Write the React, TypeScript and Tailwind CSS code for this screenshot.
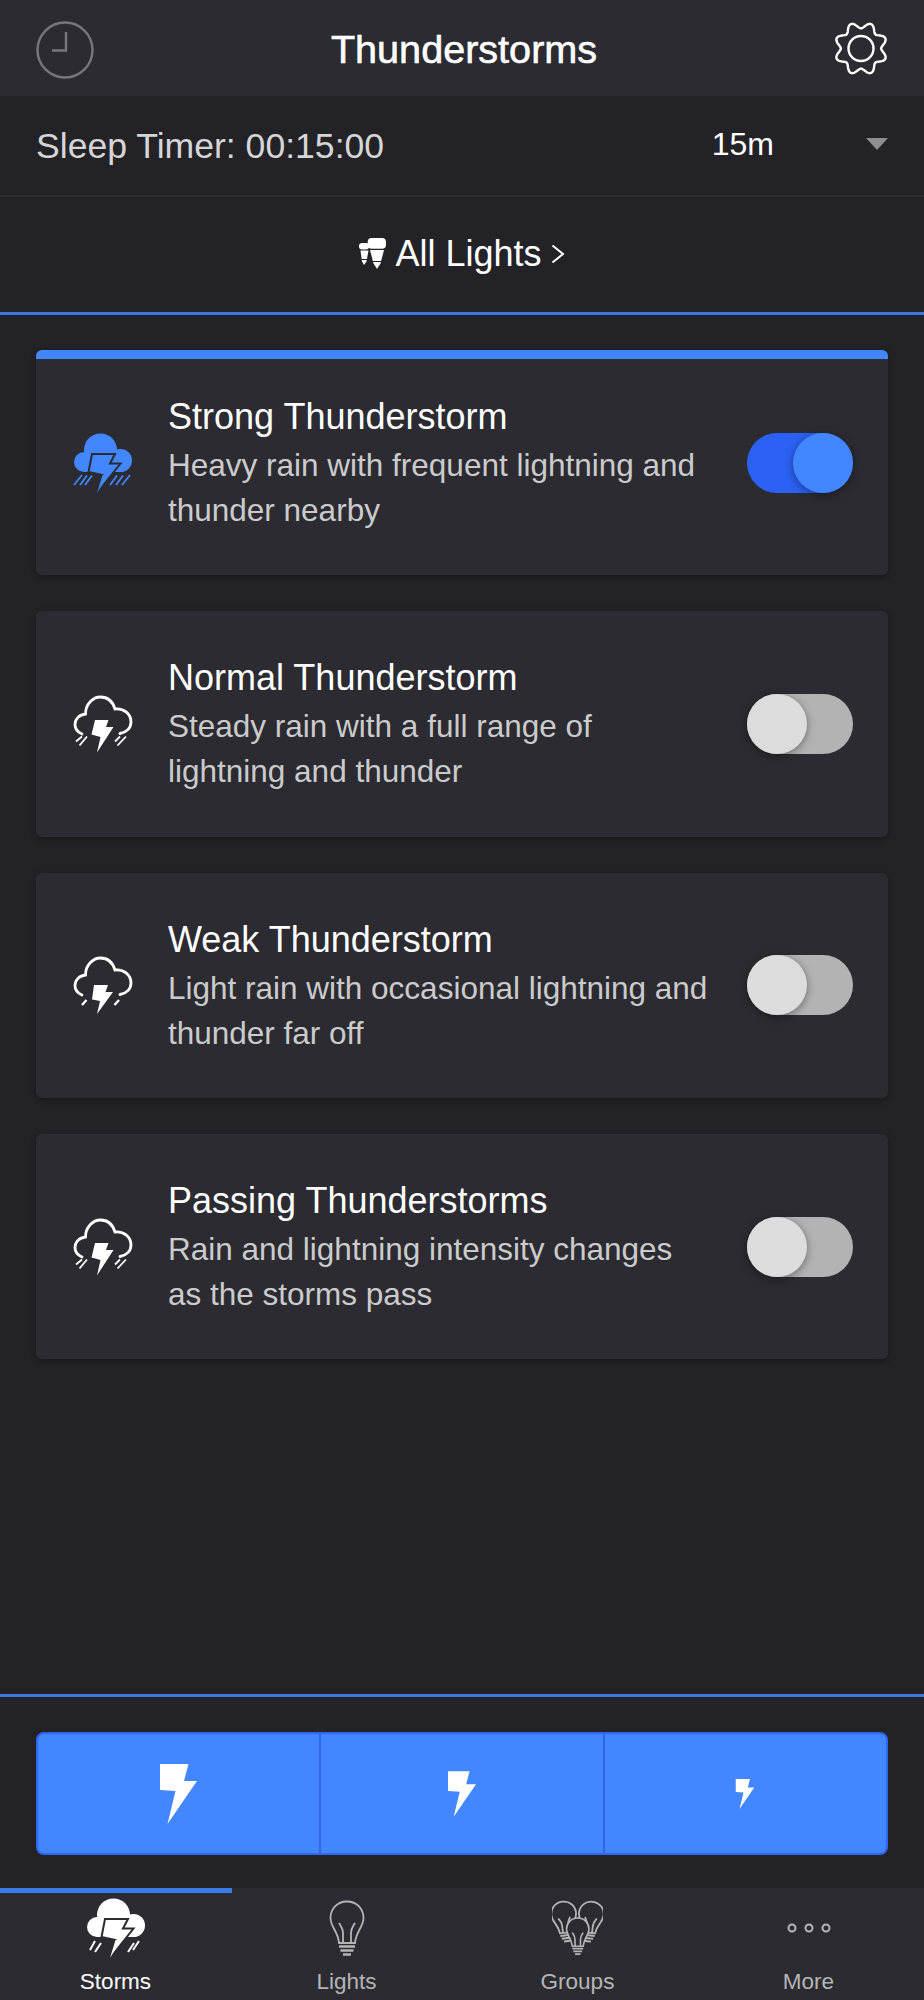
import React from "react";

const storms = [
  { title: "Strong Thunderstorm", desc: "Heavy rain with frequent lightning and\nthunder nearby", on: true, icon: "strong" },
  { title: "Normal Thunderstorm", desc: "Steady rain with a full range of\nlightning and thunder", on: false, icon: "normal" },
  { title: "Weak Thunderstorm", desc: "Light rain with occasional lightning and\nthunder far off", on: false, icon: "weak" },
  { title: "Passing Thunderstorms", desc: "Rain and lightning intensity changes\nas the storms pass", on: false, icon: "normal" },
];

// wavy outline for the settings cog
const gearPath = () => {
  const pts: string[] = [];
  for (let i = 0; i < 240; i++) {
    const a = (i / 240) * Math.PI * 2;
    const r = 23.3 + 3.1 * Math.cos(8 * a + Math.PI);
    pts.push(`${(27 + r * Math.sin(a)).toFixed(2)} ${(26.5 - r * Math.cos(a)).toFixed(2)}`);
  }
  return `M${pts.join("L")}Z`;
};

function Gear() {
  return (
    <svg width="54" height="53" viewBox="0 0 54 53" fill="none" stroke="white" strokeWidth="2.4" className="mt-px">
      <path d={gearPath()} strokeLinejoin="round" />
      <circle cx="27" cy="26.5" r="12.5" />
    </svg>
  );
}

function Clock() {
  return (
    <svg width="58" height="58" viewBox="0 0 58 58" fill="none" stroke="#77777b" className="mt-[3px]">
      <circle cx="29" cy="29" r="27.5" strokeWidth="2.4" />
      <path d="M30 11V29.5H16" strokeWidth="2.4" />
    </svg>
  );
}

function FilledStorm({ className, tab }: { className: string; tab?: boolean }) {
  return (
    <svg width="60" height="60" viewBox="0 0 60 60" className={className}>
      <g fill="currentColor">
        <circle cx="27.5" cy="17" r="16.5" />
        <circle cx="11" cy="29" r="10" />
        <circle cx="47.5" cy="27.5" r="11.5" />
        <rect x="11" y="24" width="37" height="15" />
      </g>
      <path d="M19 21H42L37 30.5H47.5L24 60L29.5 42L15.5 39Z" fill="currentColor" stroke="#2b2b31" strokeWidth="2" />
      <path d="M24 60L29.5 42H35L24 60Z" fill="currentColor" />
      {tab ? (
        <path d="M4 52L9 43M9 54L15 45M42 54L48 45M47 52L53 43" stroke="currentColor" strokeWidth="2" fill="none" />
      ) : (
        <path d="M1 52L9 42M7 52L14 42.5M12 52L19 42.5M37 52L44 42.5M43 52L50 42.5M49 52L57 42" stroke="currentColor" strokeWidth="1.8" fill="none" />
      )}
    </svg>
  );
}

function OutlineStorm({ weak }: { weak: boolean }) {
  return (
    <svg width="60" height="58" viewBox="0 0 60 58" className="text-white">
      <path
        d="M9 39C4.5 37 2 33.5 2 29.5C2 24 6.5 19.5 12.5 19C12.5 9 20 2 27.5 2C34 2 39.5 6 42 14C51 13 58 19 58 27C58 33 53.5 37.5 47 38.5"
        fill="none"
        stroke="currentColor"
        strokeWidth="2.8"
        strokeLinecap="round"
      />
      {weak ? (
        <>
          <path d="M21 29H35L32.5 36H40L24 58L27 45L19 43.5Z" fill="currentColor" />
          <path d="M9 49L13.5 44M41.5 49L46 44" stroke="currentColor" strokeWidth="2.4" />
        </>
      ) : (
        <>
          <path d="M22 25H35.5L33 32H40.5L24 57.5L27.5 42L18.5 39.5Z" fill="currentColor" />
          <path d="M3 46.5L9 41.5M6.5 50.5L14 41.5M42 46.5L47 41.5M44.5 50.5L53 41.5" stroke="currentColor" strokeWidth="1.8" />
        </>
      )}
    </svg>
  );
}

function Bolt({ width, height }: { width: number; height: number }) {
  return (
    <svg width={width} height={height} viewBox="0 0 37 60" fill="white">
      <path d="M0 0H28.5L24 17H37L7.5 60L15.5 27L0 26Z" />
    </svg>
  );
}

const BULB_GLASS = "M18 1.5C8 1.5 1.5 9 1.5 18C1.5 27 9 31 10 43H26C27 31 34.5 27 34.5 18C34.5 9 28 1.5 18 1.5Z";

function BulbShape({ fill = "none" }: { fill?: string }) {
  return (
    <>
      <path d={BULB_GLASS} fill={fill} />
      <path d="M14 43V33C14 28 11.5 25.5 10 23M22 43V33C22 28 24.5 25.5 26 23" fill="none" />
      <path d="M10 46.5H26M11.5 50.5H24.5M14 54.5H22" fill="none" strokeWidth="2.6" />
    </>
  );
}

function Bulb() {
  return (
    <svg width="36" height="57" viewBox="0 0 36 57" stroke="#b5b5b7" strokeWidth="1.8">
      <BulbShape />
    </svg>
  );
}

function BulbGroup() {
  return (
    <svg width="51" height="57" viewBox="0 0 51 57" stroke="#b5b5b7" strokeWidth="2.4">
      <g transform="translate(-1 0.5) rotate(-7 13 20) scale(0.75)">
        <BulbShape fill="#2b2b31" />
      </g>
      <g transform="translate(25 0.5) rotate(7 13 20) scale(0.75)">
        <BulbShape fill="#2b2b31" />
      </g>
      <g transform="translate(13.5 17) scale(0.68)">
        <BulbShape fill="#2b2b31" />
      </g>
    </svg>
  );
}

function LightsIcon() {
  return (
    <svg width="27" height="31" viewBox="0 0 27 31" fill="white">
      <rect x="8.7" y="0" width="18.3" height="10.7" rx="4" />
      <path d="M11 12H25L21.5 25.5L18 31L14.5 25.5Z" />
      <rect x="0" y="5" width="10" height="6.5" rx="3" />
      <path d="M1.5 12.5H9.5L7.5 23.5L5 27L3 23.5Z" />
      <path d="M13.5 23.5H23M2.5 21.5H8.5" stroke="#232327" strokeWidth="1.2" fill="none" />
    </svg>
  );
}

function Toggle({ on }: { on: boolean }) {
  return (
    <div className={`flex h-[60px] w-[106px] shrink-0 rounded-full ${on ? "justify-end bg-[#2b62f5]" : "justify-start bg-[#b3b3b3]"}`}>
      <div className={`size-[60px] rounded-full shadow-[0_2px_8px_rgba(0,0,0,0.4)] ${on ? "bg-[#4287ff]" : "bg-[#dcdcdc]"}`} />
    </div>
  );
}

function StormCard({ title, desc, on, icon }: (typeof storms)[number]) {
  return (
    <div className="relative flex h-[225.33px] items-center overflow-hidden rounded-md bg-[#2b2b31] pr-[35px] pl-[37px] shadow-[0_2px_6px_rgba(0,0,0,0.3)]">
      {on && <div className="absolute top-0 right-0 left-0 h-[9px] bg-[#4287ff]" />}
      <div className="w-[60px] shrink-0">
        {on ? <FilledStorm className="text-[#4287ff]" /> : <OutlineStorm weak={icon === "weak"} />}
      </div>
      <div className="ml-[35px] min-w-0 flex-1 pt-0.5">
        <div className="text-[36px] leading-[45px] text-white">{title}</div>
        <div className="mt-1 whitespace-pre-line text-[31.5px] leading-[45px] text-[#cbcbcd]">{desc}</div>
      </div>
      <Toggle on={on} />
    </div>
  );
}

function Tab({ label, active, children }: { label: string; active?: boolean; children: React.ReactNode }) {
  return (
    <div className="flex flex-1 flex-col items-center pt-[11px]">
      <div className="flex h-[58px] items-center justify-center">{children}</div>
      <div className={`mt-[13px] text-[22.5px] leading-6 ${active ? "text-white" : "text-[#b5b5b7]"}`}>{label}</div>
    </div>
  );
}

export default function App() {
  return (
    <div className="flex h-[2000px] w-full flex-col bg-[#232327] font-['Liberation_Sans',Arial,sans-serif]">
      <div className="flex h-24 shrink-0 items-center justify-between bg-[#2b2b31] px-9">
        <Clock />
        <h1 className="mt-1 text-[39.6px] text-white [-webkit-text-stroke:0.6px_white]">Thunderstorms</h1>
        <Gear />
      </div>

      <div className="flex h-[101px] shrink-0 items-center justify-between border-b-2 border-[#2a2a2f] px-9">
        <span className="mt-[3px] text-[35.6px] text-[#d6d6d8]">Sleep Timer: 00:15:00</span>
        <div className="mb-1 flex items-center">
          <span className="text-[32px] text-white">15m</span>
          <span className="ml-[92px] h-0 w-0 border-x-[11px] border-t-[12px] border-x-transparent border-t-[#8e8e8e]" />
        </div>
      </div>

      <div className="flex h-[118px] shrink-0 items-center justify-center gap-[9px] border-b-[3px] border-[#3b78e7] pb-0.5">
        <LightsIcon />
        <span className="text-[36px] text-white">All Lights</span>
        <svg width="14" height="20" viewBox="0 0 14 20" fill="none" stroke="white" strokeWidth="2">
          <path d="M1.5 1.5L12 10L1.5 18.5" />
        </svg>
      </div>

      <div className="flex flex-1 flex-col gap-9 px-9 pt-[35px]">
        {storms.map((s) => (
          <StormCard key={s.title} {...s} />
        ))}
      </div>

      <div className="shrink-0 border-t-[3px] border-[#3b78e7] px-9 pt-[35px] pb-[33px]">
        <div className="flex h-[123px] rounded-lg border-2 border-[#2f66f5] bg-[#4287ff]">
          <div className="flex flex-1 items-center justify-center border-r-2 border-[#2f66f5]">
            <Bolt width={37} height={60} />
          </div>
          <div className="flex flex-1 items-center justify-center border-r-2 border-[#2f66f5]">
            <Bolt width={28} height={46} />
          </div>
          <div className="flex flex-1 items-center justify-center">
            <Bolt width={20} height={30} />
          </div>
        </div>
      </div>

      <div className="relative flex h-28 shrink-0 bg-[#2b2b31]">
        <div className="absolute top-0 left-0 h-[5px] w-[232px] bg-[#3b7de8]" />
        <Tab label="Storms" active>
          <FilledStorm className="text-white" tab />
        </Tab>
        <Tab label="Lights">
          <Bulb />
        </Tab>
        <Tab label="Groups">
          <BulbGroup />
        </Tab>
        <Tab label="More">
          <svg width="44" height="12" viewBox="0 0 44 12" fill="none" stroke="#b5b5b7" strokeWidth="2">
            <circle cx="5" cy="6" r="3.5" />
            <circle cx="22" cy="6" r="3.5" />
            <circle cx="39" cy="6" r="3.5" />
          </svg>
        </Tab>
      </div>
    </div>
  );
}
